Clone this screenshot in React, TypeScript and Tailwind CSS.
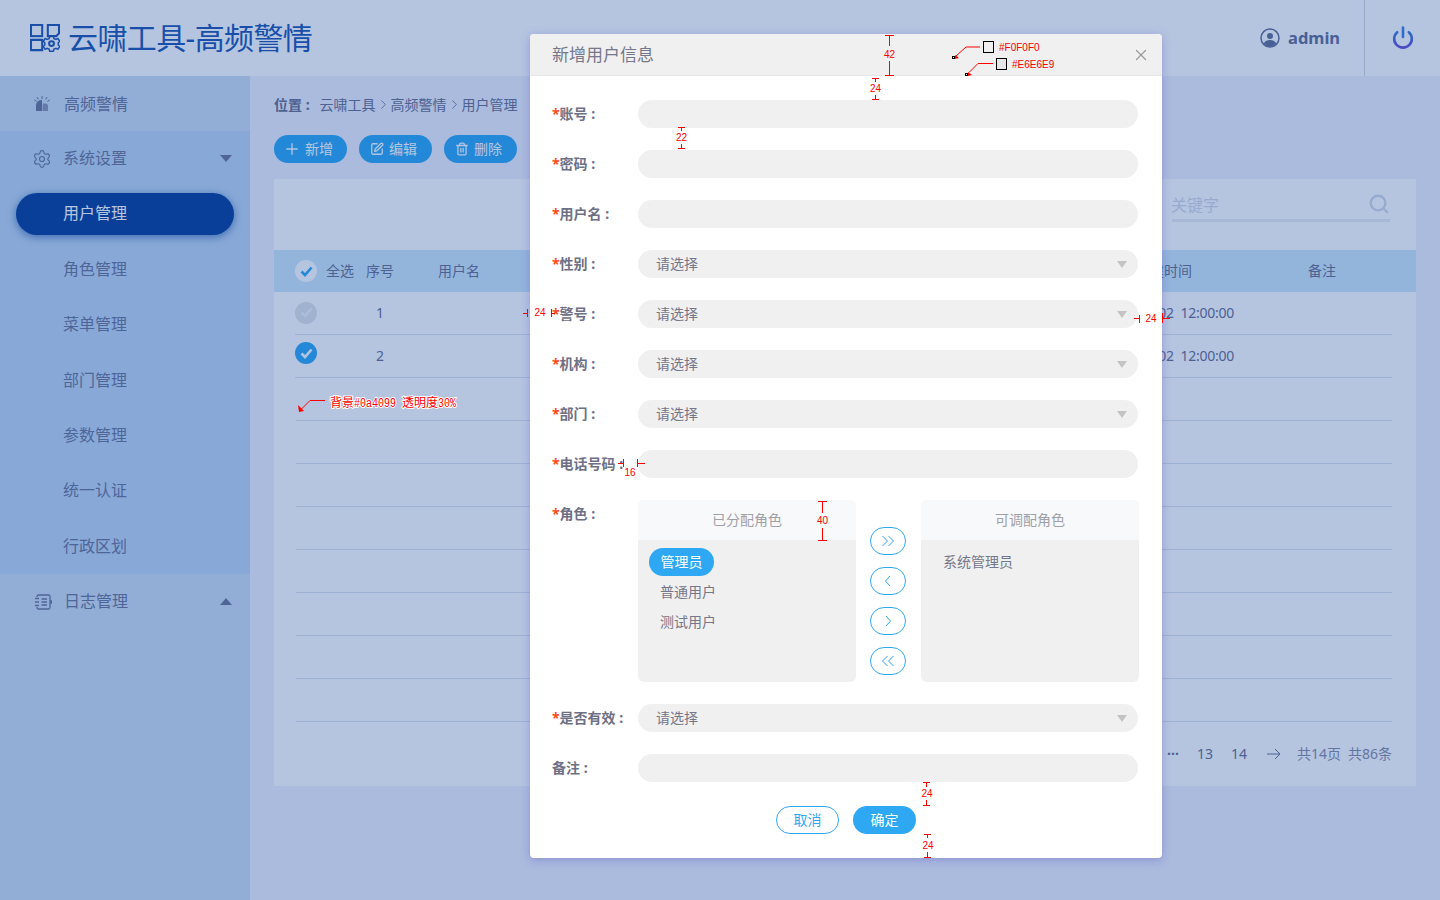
import { ChevronRight, Plus, Search, Settings, SquarePen, Trash2, X } from 'lucide-react'

const subMenu = ['角色管理', '菜单管理', '部门管理', '参数管理', '统一认证', '行政区划']
const emptyRows = [3, 4, 5, 6, 7, 8, 9, 10]

function Logo() {
  return (
    <svg width="30" height="28" viewBox="0 0 32 30" fill="none" stroke="#2257b1" strokeWidth="2.2" className="shrink-0">
      <rect x="1" y="1" width="12" height="12" />
      <path d="M19 1h12v9l-3 3h-9z" />
      <path d="M1 17h12v11H1z" />
      <path d="M21 13.500h4l.6 2.200 2.200.9 2-1.100 2 3-1.600 1.600v2.400l1.600 1.600-2 3-2-1.100-2.200.9-.6 2.200h-4l-.6-2.200-2.200-.9-2 1.100-2-3 1.600-1.600v-2.400l-1.600-1.600 2-3 2 1.100 2.200-.9z" strokeWidth="1.600" fill="#fff" />
      <circle cx="23" cy="21" r="2.600" />
    </svg>
  )
}

function AlarmIcon() {
  return (
    <svg width="16" height="16" viewBox="0 0 16 16" className="shrink-0" fill="#6d7698">
      <path d="M2 15V9a6 5 0 0 1 6-5v11z" fill="#6d7698" />
      <path d="M8.600 7.600h3.200a2.400 2.400 0 0 1 2.200 2.200V15H8.600z" fill="#8e96b2" />
      <path d="M8 0v3M3 1l1.400 2.400M13 1l-1.400 2.400M.4 4l2.200 1.400M15.600 4l-2.200 1.400" stroke="#6d7698" strokeWidth="1" fill="none" />
    </svg>
  )
}

function LogIcon() {
  return (
    <svg width="18" height="16" viewBox="0 0 18 16" fill="none" stroke="#6d7698" strokeWidth="1.300" className="shrink-0">
      <path d="M3 3V2.500A1.500 1.500 0 0 1 4.500 1h10A1.500 1.500 0 0 1 16 2.500V13.500A1.500 1.500 0 0 1 14.500 15h-10A1.500 1.500 0 0 1 3 13.500V13" />
      <path d="M1 4.500h4M1 8h4M1 11.500h4M7.500 5H13M7.500 8H13M7.500 11H13M16 7h1.500v2H16" />
    </svg>
  )
}

function Check({ state }: { state: 'all' | 'off' | 'on' }) {
  const cls =
    state === 'all'
      ? 'bg-white text-[#2fa8f3]'
      : state === 'on'
        ? 'bg-[#2fa8f3] text-white'
        : 'bg-[#e2e4ea] text-[#f3f4f7]'
  return (
    <span className={`flex size-[22px] shrink-0 items-center justify-center rounded-full ${cls}`}>
      <svg width="13" height="11" viewBox="0 0 13 11" fill="none" stroke="currentColor" strokeWidth="2.600">
        <path d="M1.500 5.500l3.500 3.500 6.500-7.500" />
      </svg>
    </span>
  )
}

function TableRow({ state, no }: { state: 'off' | 'on'; no: string }) {
  return (
    <div className="ml-[21px] mr-[24px] flex h-[43px] items-center border-b border-[#dde3ef] text-[#6b7090]">
      <div className={state === 'on' ? '-mt-[6px]' : '-mt-[1px]'}>
        <Check state={state} />
      </div>
      <span className="w-[49px]" />
      <span className="w-[28px] pb-[2px] text-center text-[14px]">{no}</span>
      <div className="flex-1" />
      <div className="flex w-[98px] justify-end whitespace-pre pb-[2px] text-[14px] tracking-[-0.25px]">2020-01-02  12:00:00</div>
      <div className="w-[158px]" />
    </div>
  )
}

function Field({ label, required = true, children }: { label: string; required?: boolean; children: React.ReactNode }) {
  return (
    <div className="flex">
      <label className="flex h-[28px] w-[86px] shrink-0 items-center whitespace-pre pb-[2px] text-[14px] font-bold text-[#6e7085]">
        {required && <span className="text-[#ff4a1c]">*</span>}
        {label} :
      </label>
      {children}
    </div>
  )
}

function TextBox() {
  return <div className="h-[28px] w-[500px] rounded-full bg-[#f0f0f0]" />
}

function SelectBox() {
  return (
    <div className="flex h-[28px] w-[500px] items-center justify-between rounded-full bg-[#f0f0f0] pl-[18px] pr-[11px] text-[14px] text-[#75778a]">
      <span className="pb-[2px]">请选择</span>
      <span className="h-0 w-0 border-x-[5.5px] border-t-[7px] border-x-transparent border-t-[#c4c4c4]" />
    </div>
  )
}

function MoveButton({ d }: { d: string }) {
  return (
    <button className="flex h-[28px] w-[36px] items-center justify-center rounded-full border border-[#2fa8f3] bg-white text-[#2fa8f3]">
      <svg width="14" height="12" viewBox="0 0 14 12" fill="none" stroke="currentColor" strokeWidth="1">
        <path d={d} />
      </svg>
    </button>
  )
}

function Annotations() {
  return (
    <svg width="1440" height="900" viewBox="0 0 1440 900" fill="none" stroke="#ff0000" className="pointer-events-none absolute inset-0">
      {/* measure marks */}
      <path d="M889.500 35v11M889.500 61v15M885 35.500h9M885 75.500h9" strokeWidth="1" />
      <path d="M875.500 78v4M875.500 95v5M872 78.500h7M872 99.500h7" strokeWidth="1" />
      <path d="M681.500 127v4M681.500 144v5M678 127.500h7M678 148.500h7" strokeWidth="1" />
      <path d="M527.500 309v8M523 313.500h5M551.500 309v8M552 313.500h3" strokeWidth="1" />
      <path d="M1134 318.500h5M1139.500 315v8M1162.500 313v10M1163 318.500h7" strokeWidth="1" />
      <path d="M618 463.500h5M623.500 459v8M637.500 459v8M638 463.500h7" strokeWidth="1" />
      <path d="M822.500 501v12M822.500 528v13M818 501.500h9M818 540.500h9" strokeWidth="1" />
      <path d="M926.500 782v5M926.500 800v5M923 782.500h7M923 805.500h7" strokeWidth="1" />
      <path d="M927.500 834v4M927.500 852v6M924 834.500h7M924 857.500h7" strokeWidth="1" />
      <g fill="#ff0000" stroke="none" fontSize="10" textAnchor="middle" fontFamily="'Liberation Sans', sans-serif">
        <text x="889.500" y="58">42</text>
        <text x="875.500" y="92">24</text>
        <text x="681.500" y="141">22</text>
        <text x="540" y="316">24</text>
        <text x="1151" y="322">24</text>
        <text x="630" y="476">16</text>
        <text x="822.500" y="524">40</text>
        <text x="927" y="797">24</text>
        <text x="928" y="849">24</text>
      </g>

      {/* colour callouts */}
      <rect x="983.500" y="41.500" width="10" height="11" fill="#f0f0f0" stroke="#000" />
      <rect x="996.500" y="58.500" width="10" height="11" fill="#e6e6e9" stroke="#000" />
      <rect x="952.500" y="56.500" width="2" height="2" fill="#fff" stroke="#000" />
      <rect x="965.500" y="73.500" width="2" height="2" fill="#fff" stroke="#000" />
      <path d="M980 47h-14l-10 9" strokeWidth="1" />
      <path d="M993 63.500h-15l-9 9" strokeWidth="1" />
      <path d="M955 55l4 3-4 1zM968 72l4 3-4 1z" fill="#ff0000" stroke="none" />
      <g fill="#ff0000" stroke="none" fontSize="10" fontFamily="'Liberation Sans', sans-serif">
        <text x="999" y="51">#F0F0F0</text>
        <text x="1012" y="68">#E6E6E9</text>
      </g>

      {/* overlay note */}
      <path d="M325 400.500h-15l-9 9" strokeWidth="1" />
      <path d="M298 405l1 7 5-1z" fill="#ff0000" stroke="none" />
      <text
        x="330"
        y="407"
        fill="#ff0000"
        stroke="#ffffff"
        strokeWidth="2"
        fontSize="12"
        className="[paint-order:stroke]"
        fontFamily="'Liberation Mono', 'Noto Sans CJK SC', monospace"
      >
        背景
        <tspan textLength="42" lengthAdjust="spacingAndGlyphs">#0a4099</tspan>
        <tspan dx="6">透明度</tspan>
        <tspan textLength="18" lengthAdjust="spacingAndGlyphs">30%</tspan>
      </text>
    </svg>
  )
}

export default function App() {
  return (
    <div className="relative flex h-[900px] w-[1440px] flex-col overflow-hidden bg-[#f0f1fb] font-['Noto_Sans','Noto_Sans_CJK_SC',sans-serif] text-[14px]">
      {/* Top bar */}
      <header className="flex h-[76px] shrink-0 items-center bg-white pl-[30px]">
        <Logo />
        <h1 className="ml-[8px] whitespace-nowrap text-[30px] leading-none tracking-[-0.6px] text-[#2257b1]">云啸工具-高频警情</h1>
        <div className="ml-auto flex h-full items-center">
          <svg width="20" height="20" viewBox="0 0 20 20" className="mr-[8px]" fill="#636f95">
            <circle cx="10" cy="10" r="9" fill="none" stroke="#636f95" strokeWidth="1.500" />
            <circle cx="10" cy="8" r="3" />
            <path d="M3.800 15.500C5 12.800 7.300 12 10 12s5 .8 6.200 3.500A8.600 8.600 0 0 1 10 18.500a8.600 8.600 0 0 1-6.200-3z" />
          </svg>
          <span className="w-[76px] text-[16.500px] font-bold text-[#636f95]">admin</span>
          <div className="flex h-full w-[76px] items-center justify-center border-l border-[#d5d9e6]">
            <svg width="24" height="24" viewBox="0 0 24 24" fill="none" strokeWidth="2.600" stroke="url(#power)" strokeLinecap="round">
              <defs>
                <linearGradient id="power" x1="0" y1="0" x2="0" y2="1">
                  <stop offset="0" stopColor="#3f7fe0" />
                  <stop offset="1" stopColor="#6b4fd8" />
                </linearGradient>
              </defs>
              <path d="M6.200 6.200a8.800 8.800 0 1 0 11.600 0" />
              <path d="M12 1.500v9.500" stroke="#3f7fe0" />
            </svg>
          </div>
        </div>
      </header>

      <div className="flex min-h-0 flex-1">
        {/* Sidebar */}
        <aside className="w-[250px] shrink-0 bg-[#cddff3] text-[#6d7698]">
          <div className="flex h-[55px] items-center gap-[14px] pl-[34px]">
            <AlarmIcon />
            <span className="text-[16px]">高频警情</span>
          </div>
          <div className="grid h-[443px] auto-rows-fr bg-[#bfd7f2]">
            <div className="flex items-center pl-[32px] pr-[18px]">
              <Settings size={20} strokeWidth={1.400} />
              <span className="ml-[11px] pb-[1px] text-[16px]">系统设置</span>
              <span className="ml-auto h-0 w-0 border-x-[6px] border-t-[7px] border-x-transparent border-t-[#6d7698]" />
            </div>
            <div className="flex items-center pl-[16px] pr-[16px]">
              <div className="flex h-[42px] w-full items-center rounded-full bg-[#0a4099] pb-[2px] pl-[47px] text-[16px] text-white shadow-[0_2px_8px_rgba(10,64,153,0.6)]">
                用户管理
              </div>
            </div>
            {subMenu.map((m) => (
              <div key={m} className="flex items-center pb-[1px] pl-[63px] text-[16px]">
                {m}
              </div>
            ))}
          </div>
          <div className="flex h-[55px] items-center pl-[34px] pr-[18px]">
            <LogIcon />
            <span className="ml-[12px] pb-[1px] text-[16px]">日志管理</span>
            <span className="ml-auto h-0 w-0 border-x-[6px] border-b-[7px] border-x-transparent border-b-[#6d7698]" />
          </div>
        </aside>

        {/* Main */}
        <main className="flex-1 px-[24px] text-[#6b7090]">
          <div className="flex h-[59px] items-center pb-[2px] whitespace-pre">
            <span className="mr-[10px] font-bold">位置 :</span>
            <span>云啸工具</span>
            <ChevronRight size={15} strokeWidth={1.300} />
            <span>高频警情</span>
            <ChevronRight size={15} strokeWidth={1.300} />
            <span>用户管理</span>
          </div>
          <div className="flex gap-[12px] text-[14px] text-white">
            <button className="flex h-[28px] w-[73px] items-center justify-center gap-[4px] rounded-full bg-[#2fa8f3] pr-[5px]">
              <Plus size={18} strokeWidth={1.800} />
              <span className="pb-[1px]">新增</span>
            </button>
            <button className="flex h-[28px] w-[73px] items-center justify-center gap-[5px] rounded-full bg-[#2fa8f3] pr-[4px]">
              <SquarePen size={14} strokeWidth={2.200} />
              <span className="pb-[1px]">编辑</span>
            </button>
            <button className="flex h-[28px] w-[73px] items-center justify-center gap-[5px] rounded-full bg-[#2fa8f3] pr-[4px]">
              <Trash2 size={14} strokeWidth={2.200} />
              <span className="pb-[1px]">删除</span>
            </button>
          </div>

          <section className="mt-[16px] h-[607px] bg-white">
            <div className="flex h-[71px] items-start justify-end pr-[26px] pt-[13px]">
              <div className="flex h-[30px] w-[218px] items-center justify-between border-b-[3px] border-[#eaebf3] text-[16px] text-[#d4dae8]">
                <span className="-ml-[1px] pb-[2px]">关键字</span>
                <Search size={22} strokeWidth={2.500} className="mb-[3px]" />
              </div>
            </div>
            <div className="flex h-[42px] items-center bg-[#cfe9f9] pl-[21px]">
              <Check state="all" />
              <span className="ml-[9px] pb-[2px]">全选</span>
              <span className="ml-[12px] pb-[2px]">序号</span>
              <span className="ml-[44px] pb-[2px]">用户名</span>
              <span className="ml-auto w-[172px] pb-[2px]">创建时间</span>
              <span className="mr-[80px] pb-[2px]">备注</span>
            </div>
            <TableRow state="off" no="1" />
            <TableRow state="on" no="2" />
            {emptyRows.map((r) => (
              <div key={r} className="ml-[22px] mr-[24px] h-[43px] border-b border-[#dde3ef]" />
            ))}
            <div className="flex h-[63px] items-center justify-end pr-[24px] whitespace-nowrap">
              <span className="mr-[18px] text-[14px] font-bold">···</span>
              <span className="mr-[18px]">13</span>
              <span className="mr-[20px]">14</span>
              <svg width="14" height="12" viewBox="0 0 14 12" fill="none" stroke="currentColor" className="mr-[16px]">
                <path d="M0 6h13M8 1l5 5-5 5" />
              </svg>
              <span className="mr-[7px] text-[#8a8ea6]">共14页</span>
              <span className="text-[#8a8ea6]">共86条</span>
            </div>
          </section>
        </main>
      </div>

      {/* Modal mask */}
      <div className="absolute inset-0 bg-[#0a4099]/30" />

      {/* Dialog */}
      <div className="absolute left-[530px] top-[34px] flex h-[824px] w-[632px] flex-col rounded-[4px] bg-white shadow-[0_2px_10px_rgba(90,70,200,0.35)]">
        <div className="flex h-[42px] shrink-0 items-center justify-between rounded-t-[4px] border-b border-[#e6e6e9] bg-[#f0f0f0] pl-[22px] pr-[12px]">
          <span className="text-[17px] text-[#75778a]">新增用户信息</span>
          <X size={18} strokeWidth={1.600} className="text-[#9a9a9a]" />
        </div>
        <div className="flex flex-col gap-[22px] pl-[22px] pr-[24px] pt-[24px]">
          <Field label="账号">
            <TextBox />
          </Field>
          <Field label="密码">
            <TextBox />
          </Field>
          <Field label="用户名">
            <TextBox />
          </Field>
          <Field label="性别">
            <SelectBox />
          </Field>
          <Field label="警号">
            <SelectBox />
          </Field>
          <Field label="机构">
            <SelectBox />
          </Field>
          <Field label="部门">
            <SelectBox />
          </Field>
          <Field label="电话号码">
            <TextBox />
          </Field>
          <Field label="角色">
            <div className="flex h-[182px]">
              <div className="w-[218px] overflow-hidden rounded-[6px] bg-[#f0f0f0]">
                <div className="flex h-[40px] items-center justify-center bg-[#f8f9fb] pb-[2px] text-[#a0a0a8]">已分配角色</div>
                <div className="flex flex-col items-start px-[11px] pt-[8px] text-[#75778a]">
                  <span className="flex h-[28px] w-[65px] items-center justify-center rounded-full bg-[#2fa8f3] pb-[2px] text-white">管理员</span>
                  <span className="flex h-[30px] items-center pl-[11px]">普通用户</span>
                  <span className="flex h-[30px] items-center pl-[11px]">测试用户</span>
                </div>
              </div>
              <div className="flex w-[65px] flex-col items-center gap-[12px] pr-[1px] pt-[27px]">
                <MoveButton d="M1.500 1l5 5-5 5M7.500 1l5 5-5 5" />
                <MoveButton d="M9 1L4.500 6 9 11" />
                <MoveButton d="M5 1l4.500 5L5 11" />
                <MoveButton d="M6.500 1l-5 5 5 5M12.500 1l-5 5 5 5" />
              </div>
              <div className="w-[218px] overflow-hidden rounded-[6px] bg-[#f0f0f0]">
                <div className="flex h-[40px] items-center justify-center bg-[#f8f9fb] pb-[2px] text-[#a0a0a8]">可调配角色</div>
                <div className="px-[22px] pt-[8px] leading-[28px] text-[#75778a]">系统管理员</div>
              </div>
            </div>
          </Field>
          <Field label="是否有效">
            <SelectBox />
          </Field>
          <Field label="备注" required={false}>
            <TextBox />
          </Field>
        </div>
        <div className="mt-[24px] flex justify-center gap-[14px]">
          <button className="h-[28px] w-[63px] rounded-full border border-[#2fa8f3] bg-white pb-[2px] text-[#2fa8f3]">取消</button>
          <button className="h-[28px] w-[63px] rounded-full bg-[#2fa8f3] pb-[2px] text-white">确定</button>
        </div>
      </div>

      <Annotations />
    </div>
  )
}
